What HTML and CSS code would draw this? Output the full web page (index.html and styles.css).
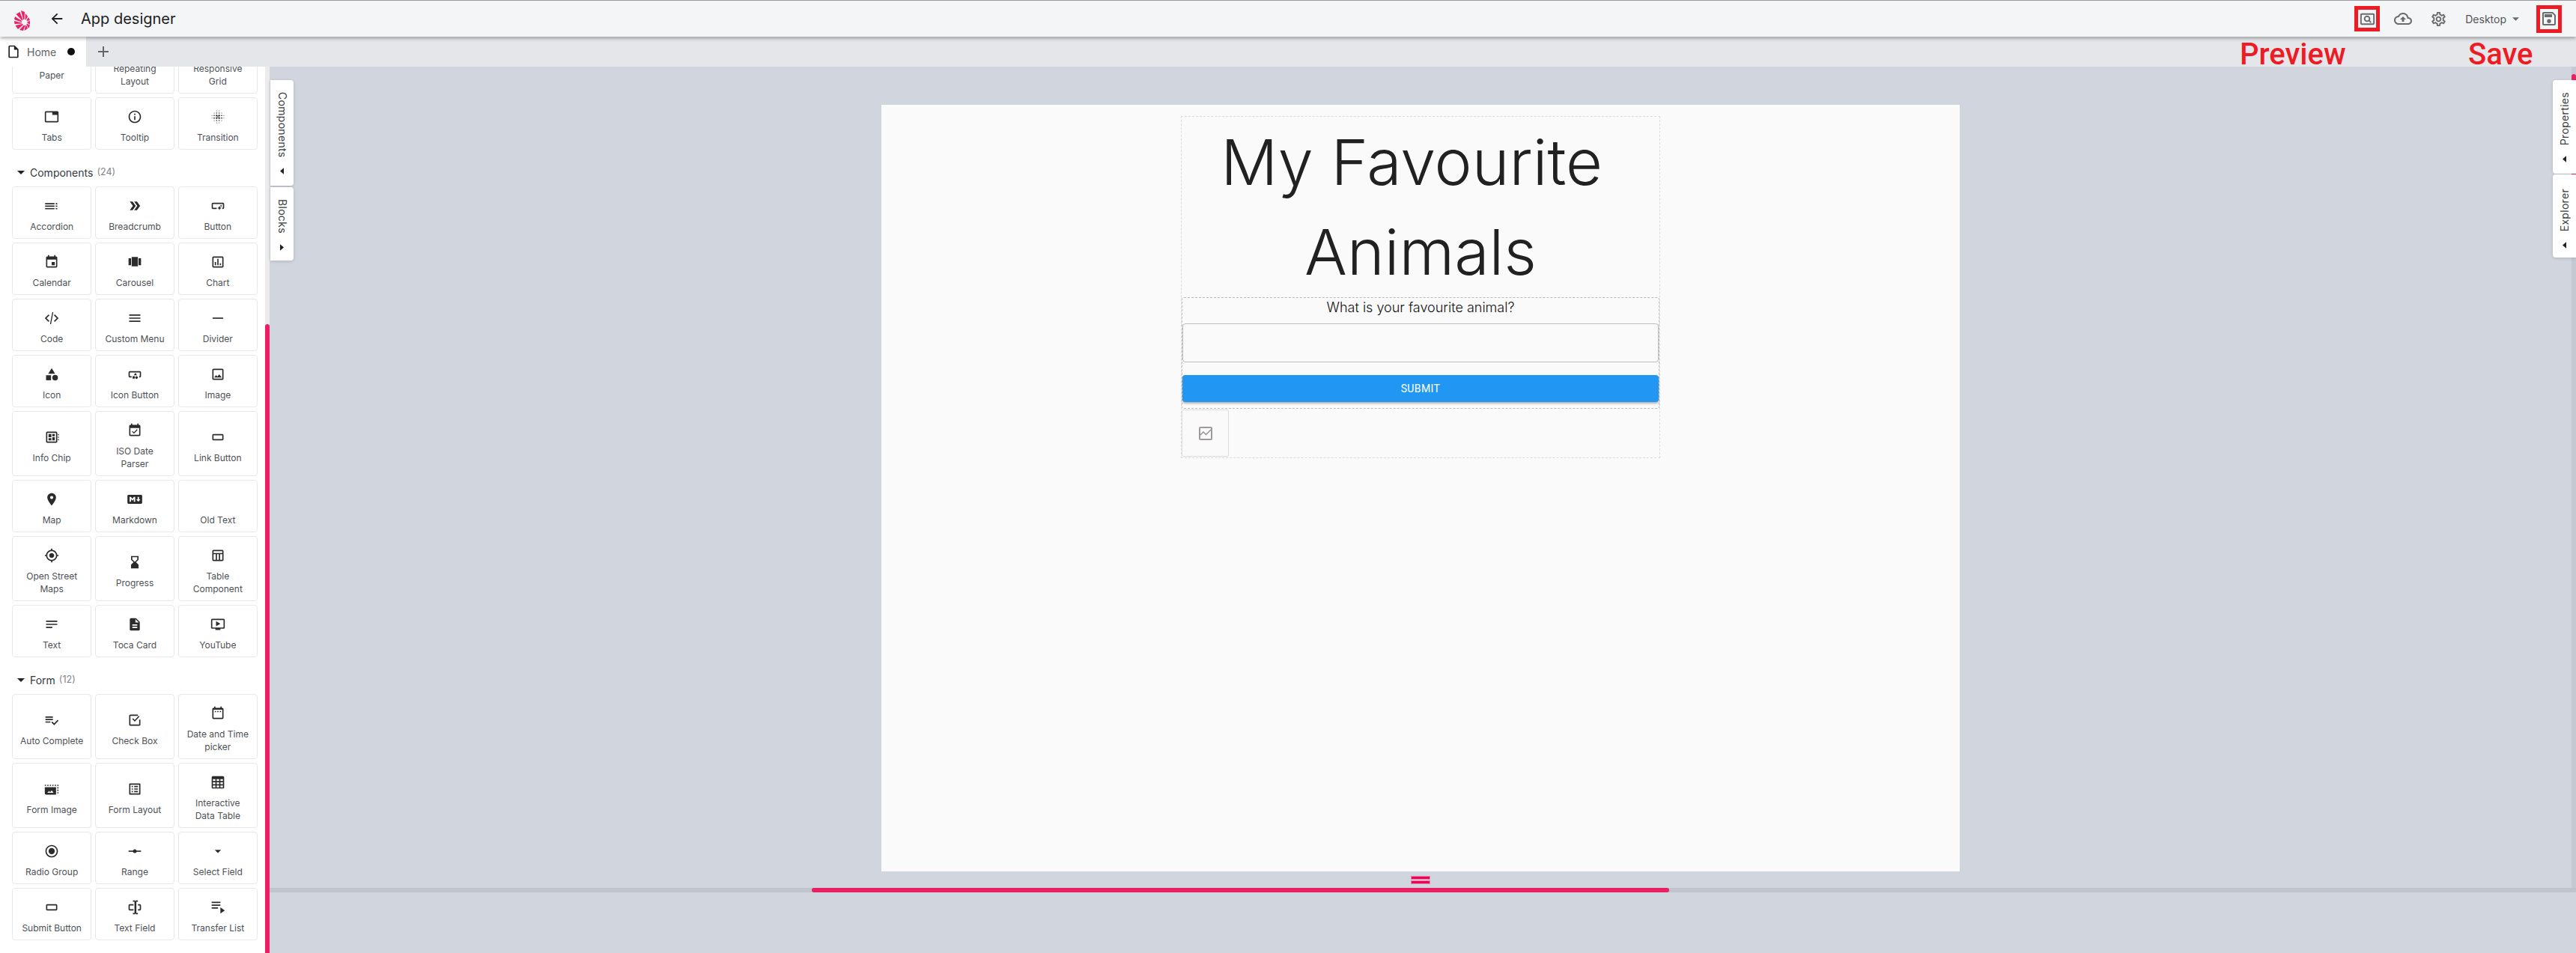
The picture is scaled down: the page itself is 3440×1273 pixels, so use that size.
FILE: index.html
```html
<!DOCTYPE html>
<html lang="en">
<head>
<meta charset="utf-8">
<title>App designer</title>
<link rel="stylesheet" href="styles.css">
</head>
<body>
<svg class="defs" width="0" height="0" aria-hidden="true">
<defs>
<symbol id="i-tabs" viewBox="0 0 24 24"><path d="M21 3H3c-1.1 0-2 .9-2 2v14c0 1.1.9 2 2 2h18c1.1 0 2-.9 2-2V5c0-1.1-.9-2-2-2zm0 16H3V5h10v4h8v10z"/></symbol>
<symbol id="i-info" viewBox="0 0 24 24"><path d="M11 7h2v2h-2zm0 4h2v6h-2zm1-9C6.48 2 2 6.48 2 12s4.48 10 10 10 10-4.48 10-10S17.52 2 12 2zm0 18c-4.41 0-8-3.59-8-8s3.59-8 8-8 8 3.59 8 8-3.59 8-8 8z"/></symbol>
<symbol id="i-blur" viewBox="0 0 24 24"><g><circle cx="10" cy="10" r="1.4"/><circle cx="14" cy="10" r="1.4"/><circle cx="10" cy="14" r="1.4"/><circle cx="14" cy="14" r="1.4"/><circle cx="12" cy="12" r="1"/><circle cx="6" cy="10" r="1"/><circle cx="6" cy="14" r="1"/><circle cx="18" cy="10" r="1"/><circle cx="18" cy="14" r="1"/><circle cx="10" cy="6" r="1"/><circle cx="14" cy="6" r="1"/><circle cx="10" cy="18" r="1"/><circle cx="14" cy="18" r="1"/><circle cx="6" cy="6" r=".7"/><circle cx="18" cy="6" r=".7"/><circle cx="6" cy="18" r=".7"/><circle cx="18" cy="18" r=".7"/><circle cx="2.5" cy="10" r=".6"/><circle cx="2.5" cy="14" r=".6"/><circle cx="21.5" cy="10" r=".6"/><circle cx="21.5" cy="14" r=".6"/><circle cx="10" cy="2.5" r=".6"/><circle cx="14" cy="2.5" r=".6"/><circle cx="10" cy="21.5" r=".6"/><circle cx="14" cy="21.5" r=".6"/></g></symbol>
<symbol id="i-accordion" viewBox="0 0 24 24"><path d="M1.500 7.500h15v2h-15zM1.500 11.500h15v2h-15zM1.500 15.500h15v2h-15zM18.500 7.500h2.500v2h-2.500zM18.500 11.500h2.500v2h-2.500zM18.500 15.500h2.500v2h-2.500z"/></symbol>
<symbol id="i-double" viewBox="0 0 24 24"><path d="M15.5 5H11l5 7-5 7h4.500l5-7zM8.500 5H4l5 7-5 7h4.500l5-7z"/></symbol>
<symbol id="i-smart" viewBox="0 0 24 24"><path d="M22 9v6c0 1.1-.9 2-2 2h-1v-2h1V9H4v6h6v2H4c-1.1 0-2-.9-2-2V9c0-1.1.9-2 2-2h16c1.1 0 2 .9 2 2zm-7.5 10l1.09-2.41L18 15.5l-2.41-1.09L14.5 12l-1.09 2.41L11 15.5l2.41 1.09L14.5 19zm2.5-5l.62-1.38L19 12l-1.38-.62L17 10l-.62 1.38L15 12l1.38.62L17 14z"/></symbol>
<symbol id="i-event" viewBox="0 0 24 24"><path d="M17 12h-5v5h5v-5zM16 1v2H8V1H6v2H5c-1.11 0-1.99.9-1.99 2L3 19c0 1.1.89 2 2 2h14c1.1 0 2-.9 2-2V5c0-1.1-.9-2-2-2h-1V1h-2zm3 18H5V8h14v11z"/></symbol>
<symbol id="i-carousel" viewBox="0 0 24 24"><path d="M7 19h10V4H7v15zm-5-2h4V6H2v11zM18 6v11h4V6h-4z"/></symbol>
<symbol id="i-chart" viewBox="0 0 24 24"><path d="M9 17H7v-5h2v5zm4 0h-2V7h2v10zm4 0h-2v-3h2v3zm2 2H5V5h14v14zm0-16H5c-1.1 0-2 .9-2 2v14c0 1.1.9 2 2 2h14c1.1 0 2-.9 2-2V5c0-1.1-.9-2-2-2z"/></symbol>
<symbol id="i-code" viewBox="0 0 24 24"><path d="M8.400 16.600L3.800 12l4.600-4.600L7 6l-6 6 6 6 1.400-1.400zm7.200 0l4.600-4.600-4.600-4.600L17 6l6 6-6 6-1.400-1.400zM13 2.500h1.600L11 21.500H9.400z"/></symbol>
<symbol id="i-menu" viewBox="0 0 24 24"><path d="M3 18h18v-2H3v2zm0-5h18v-2H3v2zm0-7v2h18V6H3z"/></symbol>
<symbol id="i-minus" viewBox="0 0 24 24"><path d="M3.500 11h17v2h-17z"/></symbol>
<symbol id="i-category" viewBox="0 0 24 24"><path d="M12 2l-5.500 9h11z"/><circle cx="17.500" cy="17.500" r="4.500"/><path d="M3 13.500h8v8H3z"/></symbol>
<symbol id="i-iconbtn" viewBox="0 0 24 24"><path d="M22 9v6c0 1.100-.9 2-2 2h-1v-2h1V9H4v6h3v2H4c-1.100 0-2-.9-2-2V9c0-1.100.9-2 2-2h16c1.100 0 2 .9 2 2zM13 9.500l-2.500 4h5zM17 17.200a2.200 2.200 0 1 1-4.400 0 2.200 2.200 0 0 1 4.400 0zM8.500 15h3.500v4H8.500z"/></symbol>
<symbol id="i-image" viewBox="0 0 24 24"><path d="M19 5v14H5V5h14m0-2H5c-1.100 0-2 .9-2 2v14c0 1.100.9 2 2 2h14c1.100 0 2-.9 2-2V5c0-1.100-.9-2-2-2zm-4.860 8.860l-3 3.870L9 13.140 6 17h12l-3.860-5.140z"/></symbol>
<symbol id="i-chip" viewBox="0 0 24 24"><path d="M19 3H5c-1.100 0-2 .9-2 2v14c0 1.100.9 2 2 2h14c1.100 0 2-.9 2-2V5c0-1.100-.9-2-2-2zm0 16H5V5h14v14zM7 7h4.500v5H7zM7 13.500h4.500V17H7zM13 7h4v3.500h-4zM13 12h4v5h-4zM22 7h1.500v2H22zM22 11h1.500v2H22zM22 15h1.500v2H22z"/></symbol>
<symbol id="i-eventok" viewBox="0 0 24 24"><path d="M16.530 11.060L15.470 10l-4.880 4.880-2.120-2.120-1.060 1.060L10.590 17l5.940-5.940zM19 3h-1V1h-2v2H8V1H6v2H5c-1.110 0-1.990.9-1.990 2L3 19c0 1.100.89 2 2 2h14c1.100 0 2-.9 2-2V5c0-1.100-.9-2-2-2zm0 16H5V8h14v11z"/></symbol>
<symbol id="i-rect" viewBox="0 0 24 24"><path d="M19 7H5c-1.100 0-2 .9-2 2v6c0 1.100.9 2 2 2h14c1.100 0 2-.9 2-2V9c0-1.100-.9-2-2-2zm0 8H5V9h14v6z"/></symbol>
<symbol id="i-pin" viewBox="0 0 24 24"><path d="M12 2C8.130 2 5 5.130 5 9c0 5.250 7 13 7 13s7-7.750 7-13c0-3.870-3.130-7-7-7zm0 9.500c-1.380 0-2.500-1.120-2.500-2.500s1.120-2.500 2.500-2.500 2.500 1.120 2.500 2.500-1.120 2.500-2.500 2.500z"/></symbol>
<symbol id="i-md" viewBox="0 0 24 24"><path d="M20.560 18H3.440C2.650 18 2 17.370 2 16.590V7.410C2 6.630 2.650 6 3.440 6h17.120c.79 0 1.440.63 1.440 1.410v9.180c0 .78-.65 1.410-1.440 1.410M6.810 15.190v-3.660l1.920 2.350 1.920-2.350v3.660h1.930V8.810h-1.930l-1.920 2.350-1.920-2.350H4.890v6.380h1.920M19.690 12h-1.920V8.810h-1.920V12h-1.930l2.890 3.280L19.690 12z" transform="translate(12 12) scale(1.180) translate(-12 -12)"/></symbol>
<symbol id="i-gps" viewBox="0 0 24 24"><path d="M12 8c-2.210 0-4 1.790-4 4s1.790 4 4 4 4-1.790 4-4-1.790-4-4-4zm8.940 3c-.46-4.170-3.770-7.480-7.940-7.940V1h-2v2.060C6.830 3.520 3.520 6.830 3.060 11H1v2h2.060c.46 4.170 3.770 7.480 7.940 7.940V23h2v-2.060c4.170-.46 7.480-3.770 7.940-7.940H23v-2h-2.060zM12 19c-3.870 0-7-3.130-7-7s3.130-7 7-7 7 3.130 7 7-3.130 7-7 7z"/></symbol>
<symbol id="i-hourglass" viewBox="0 0 24 24"><path d="M18 22l-.01-6L14 12l3.990-4.010L18 2H6v6l4 4-4 3.990V22h12zM8 7.500V4h8v3.500l-4 4-4-4z"/></symbol>
<symbol id="i-table" viewBox="0 0 24 24"><path d="M19 3H5c-1.100 0-2 .9-2 2v14c0 1.100.9 2 2 2h14c1.100 0 2-.9 2-2V5c0-1.100-.9-2-2-2zm0 2v3H5V5h14zM5 19v-9h3.500v9H5zm5.500 0v-9h3v9h-3zm5 0v-9H19v9h-3.500z"/></symbol>
<symbol id="i-notes" viewBox="0 0 24 24"><path d="M3 18h10v-2H3v2zM3 6v2h18V6H3zm0 7h18v-2H3v2z"/></symbol>
<symbol id="i-doc" viewBox="0 0 24 24"><path d="M14 2H6c-1.100 0-1.990.9-1.990 2L4 20c0 1.100.89 2 1.990 2H18c1.100 0 2-.9 2-2V8l-6-6zm2 16H8v-2h8v2zm0-4H8v-2h8v2zm-3-5V3.500L18.500 9H13z"/></symbol>
<symbol id="i-video" viewBox="0 0 24 24"><path d="M21 3H3c-1.110 0-2 .89-2 2v12c0 1.100.89 2 2 2h5v2h8v-2h5c1.100 0 1.990-.9 1.990-2L23 5c0-1.110-.9-2-2-2zm0 14H3V5h18v12zm-5-6l-7 4V7z"/></symbol>
<symbol id="i-listcheck" viewBox="0 0 24 24"><path d="M14 10H2v2h12v-2zm0-4H2v2h12V6zM2 16h8v-2H2v2zm19.500-4.500L23 13l-6.990 7-4.510-4.500L13 14l3.010 3 5.490-5.500z"/></symbol>
<symbol id="i-check" viewBox="0 0 24 24"><path d="M19 19H5V5h12V3H5c-1.110 0-2 .9-2 2v14c0 1.100.89 2 2 2h14c1.110 0 2-.9 2-2v-8h-2v8zM19.500 6.400l-1.400-1.400-6.100 6.600-2.700-2.700-1.400 1.400 4.100 4.100z"/></symbol>
<symbol id="i-datetime" viewBox="0 0 24 24"><path d="M19 3h-1V1h-2v2H8V1H6v2H5c-1.110 0-1.990.9-1.990 2L3 19c0 1.100.89 2 2 2h14c1.100 0 2-.9 2-2V5c0-1.100-.9-2-2-2zm0 16H5V6h14v13zM7 8h2v2H7zM11 8h2v2h-2zM15 8h2v2h-2z"/></symbol>
<symbol id="i-formimg" viewBox="0 0 24 24"><path d="M1 5h2v2H1zM5 5h2v2H5zM9 5h2v2H9zM13 5h2v2h-2zM17 5h2v2h-2zM21 5h2v2h-2zM21 9h2v2h-2zM21 13h2v2h-2zM21 17h2v2h-2zM1 9h18v12H3c-1.100 0-2-.9-2-2zM5 18h10l-3-4-2.500 3-1.500-2z" fill-rule="evenodd"/></symbol>
<symbol id="i-listalt" viewBox="0 0 24 24"><path d="M19 5v14H5V5h14m1.100-2H3.900c-.5 0-.9.4-.9.9v16.200c0 .4.4.9.9.9h16.200c.4 0 .9-.5.9-.9V3.900c0-.5-.5-.9-.9-.9zM11 7h6v2h-6V7zm0 4h6v2h-6v-2zm0 4h6v2h-6zM7 7h2v2H7zm0 4h2v2H7zm0 4h2v2H7z"/></symbol>
<symbol id="i-grid" viewBox="0 0 24 24"><path d="M20 2H4c-1.100 0-2 .9-2 2v16c0 1.100.9 2 2 2h16c1.100 0 2-.9 2-2V4c0-1.100-.9-2-2-2zM8 20H4v-3h4zm0-5H4v-3h4zm0-5H4V7h4zm6 10h-4v-3h4zm0-5h-4v-3h4zm0-5h-4V7h4zm6 10h-4v-3h4zm0-5h-4v-3h4zm0-5h-4V7h4z"/></symbol>
<symbol id="i-radio" viewBox="0 0 24 24"><path d="M12 7c-2.760 0-5 2.240-5 5s2.240 5 5 5 5-2.240 5-5-2.240-5-5-5zm0-5C6.480 2 2 6.480 2 12s4.480 10 10 10 10-4.480 10-10S17.520 2 12 2zm0 18c-4.420 0-8-3.580-8-8s3.580-8 8-8 8 3.580 8 8-3.580 8-8 8z"/></symbol>
<symbol id="i-range" viewBox="0 0 24 24"><path d="M2 11h20v2H2z"/><circle cx="12" cy="12" r="3"/></symbol>
<symbol id="i-drop" viewBox="0 0 24 24"><path d="M7 10l5 5 5-5z"/></symbol>
<symbol id="i-field" viewBox="0 0 24 24"><path d="M2 7h8v2H4v6h6v2H4c-1.100 0-2-.9-2-2V9c0-1.100.9-2 2-2zM17 7h3c1.100 0 2 .9 2 2v6c0 1.100-.9 2-2 2h-3v-2h3V9h-3zM9 1h3l1 1 1-1h3v2h-2.500v18H17v2h-3l-1-1-1 1H9v-2h2.500V3H9z"/></symbol>
<symbol id="i-transfer" viewBox="0 0 24 24"><path d="M2 3h14v2H2zM2 7.500h14v2H2zM2 12h10v2H2zM16 12l7 5-7 5z"/></symbol>
<symbol id="i-caret" viewBox="0 0 10 5"><path d="M0 0h10L5 5z"/></symbol>
</defs>
</svg>

<header class="topbar">
  <svg class="logo" viewBox="0 0 21 27">
    <g fill="#ec1f65">
      <path d="M9 0l5 2-.5 10H12z"/>
      <path d="M2.500 5l5-3 4 10.500-1 1z"/>
      <path d="M0 12l1-4 9 6v1.500z"/>
      <path d="M.5 18L0 14l10 2.500.5 1z"/>
      <path d="M5 25l-3.500-5 9.500-2 1 1z"/>
      <path d="M12 27l-5-1 6-6.500 1.500.5z"/>
      <path d="M18 24l-4.500 3 1.500-7 1-.5z"/>
      <path d="M21 20l-2 4-2.500-5.500.5-1z"/>
      <path d="M21 14v5l-3.500-2.500V15z"/>
      <path d="M19 9l2 4-4 1-.5-1z"/>
      <path d="M15 4l3 4-2.500 4.500-1-.5z"/>
    </g>
  </svg>
  <svg class="back" viewBox="0 0 24 24"><path d="M20 11H7.830l5.590-5.590L12 4l-8 8 8 8 1.410-1.410L7.830 13H20v-2z"/></svg>
  <h1 class="apptitle">App designer</h1>
  <div class="actions">
    <span class="framed framed-preview">
      <svg class="tool tool-preview" viewBox="0 0 24 24"><path d="M20 4H4c-1.100 0-2 .9-2 2v12c0 1.100.9 2 2 2h16c1.100 0 2-.9 2-2V6c0-1.100-.9-2-2-2zm0 14H4V6h16v12z"/><path d="M11.500 7a4.500 4.500 0 1 0 2.500 8.240l2.300 2.300 1.400-1.400-2.300-2.300A4.500 4.500 0 0 0 11.500 7zm0 2a2.500 2.500 0 1 1 0 5 2.500 2.500 0 0 1 0-5z"/></svg>
    </span>
    <svg class="tool tool-cloud" viewBox="0 0 24 24"><path d="M19.350 10.040C18.670 6.590 15.640 4 12 4 9.110 4 6.600 5.640 5.350 8.040 2.340 8.360 0 10.910 0 14c0 3.310 2.690 6 6 6h13c2.760 0 5-2.240 5-5 0-2.640-2.050-4.780-4.650-4.960zM19 18H6c-2.210 0-4-1.790-4-4 0-2.050 1.530-3.760 3.560-3.970l1.070-.11.500-.95C8.080 7.140 9.940 6 12 6c2.620 0 4.880 1.860 5.390 4.430l.3 1.500 1.530.11c1.560.1 2.780 1.410 2.780 2.960 0 1.650-1.350 3-3 3zM8 13h2.550v3h2.900v-3H16l-4-4z"/></svg>
    <svg class="tool tool-gear" viewBox="0 0 24 24"><path d="M19.430 12.980c.04-.32.07-.64.07-.98 0-.34-.03-.66-.07-.98l2.110-1.650c.19-.15.24-.42.12-.64l-2-3.460c-.09-.16-.26-.25-.44-.25-.06 0-.12.01-.17.03l-2.490 1c-.52-.4-1.080-.73-1.690-.98l-.38-2.650C14.460 2.180 14.250 2 14 2h-4c-.25 0-.46.18-.49.42l-.38 2.650c-.61.25-1.170.59-1.690.98l-2.490-1c-.06-.02-.12-.03-.18-.03-.17 0-.34.09-.43.25l-2 3.460c-.13.22-.07.49.12.64l2.110 1.650c-.04.32-.07.65-.07.98 0 .33.03.66.07.98l-2.110 1.650c-.19.15-.24.42-.12.64l2 3.460c.09.16.26.25.44.25.06 0 .12-.01.17-.03l2.490-1c.52.4 1.080.73 1.690.98l.38 2.650c.03.24.24.42.49.42h4c.25 0 .46-.18.49-.42l.38-2.650c.61-.25 1.170-.59 1.690-.98l2.490 1c.06.02.12.03.18.03.17 0 .34-.09.43-.25l2-3.460c.12-.22.07-.49-.12-.64l-2.110-1.650zm-1.980-1.710c.04.31.05.52.05.73 0 .21-.02.43-.05.73l-.14 1.130.89.7 1.080.84-.7 1.210-1.270-.51-1.040-.42-.9.68c-.43.32-.84.56-1.250.73l-1.060.43-.16 1.130-.2 1.350h-1.400l-.19-1.350-.16-1.130-1.060-.43c-.43-.18-.83-.41-1.230-.71l-.91-.7-1.060.43-1.270.51-.7-1.210 1.080-.84.89-.7-.14-1.130c-.03-.31-.05-.54-.05-.74s.02-.43.05-.73l.14-1.130-.89-.7-1.080-.84.7-1.210 1.270.51 1.040.42.9-.68c.43-.32.84-.56 1.250-.73l1.060-.43.16-1.130.2-1.350h1.390l.19 1.350.16 1.130 1.060.43c.43.18.83.41 1.230.71l.91.7 1.060-.43 1.270-.51.7 1.210-1.070.85-.89.7.14 1.130zM12 8c-2.210 0-4 1.790-4 4s1.790 4 4 4 4-1.790 4-4-1.790-4-4-4zm0 6c-1.100 0-2-.9-2-2s.9-2 2-2 2 .9 2 2-.9 2-2 2z"/></svg>
    <span class="device">Desktop</span>
    <svg class="device-caret" viewBox="0 0 10 5"><path d="M0 0h10L5 5z"/></svg>
    <span class="framed framed-save">
      <svg class="tool tool-save" viewBox="0 0 24 24"><path d="M17 3H5c-1.110 0-2 .9-2 2v14c0 1.100.89 2 2 2h14c1.100 0 2-.9 2-2V7l-4-4zm2 16H5V5h11.170L19 7.830V19zM12 12.500a2.700 2.700 0 1 0 0 5.400 2.700 2.700 0 0 0 0-5.400zM6 6h10v4H6z"/></svg>
    </span>
  </div>
  <span class="note note-preview">Preview</span>
  <span class="note note-save">Save</span>
</header>

<nav class="tabbar">
  <div class="tab">
    <svg class="tabfile" viewBox="0 0 24 24"><path d="M14 2H6c-1.100 0-1.990.9-1.990 2L4 20c0 1.100.89 2 1.990 2H18c1.100 0 2-.9 2-2V8l-6-6zM6 20V4h7v5h5v11H6z"/></svg>
    <span class="tabname">Home</span>
    <span class="tabdot"></span>
  </div>
  <svg class="tabplus" viewBox="0 0 24 24"><path d="M19 13h-6v6h-2v-6H5v-2h6V5h2v6h6v2z"/></svg>
</nav>

<main class="workspace">
  <aside class="sidebar">
    <div class="palette">
      <div class="cards">
        <div class="card"><span class="card-icon"></span><span class="card-label">Paper</span></div>
        <div class="card"><span class="card-icon"></span><span class="card-label">Repeating Layout</span></div>
        <div class="card"><span class="card-icon"></span><span class="card-label">Responsive Grid</span></div>
        <div class="card"><svg class="card-icon"><use href="#i-tabs"/></svg><span class="card-label">Tabs</span></div>
        <div class="card"><svg class="card-icon"><use href="#i-info"/></svg><span class="card-label">Tooltip</span></div>
        <div class="card"><svg class="card-icon"><use href="#i-blur"/></svg><span class="card-label">Transition</span></div>
      </div>
      <div class="section"><svg class="section-caret"><use href="#i-caret"/></svg><span class="section-name">Components</span><span class="section-count">(24)</span></div>
      <div class="cards">
        <div class="card"><svg class="card-icon"><use href="#i-accordion"/></svg><span class="card-label">Accordion</span></div>
        <div class="card"><svg class="card-icon"><use href="#i-double"/></svg><span class="card-label">Breadcrumb</span></div>
        <div class="card"><svg class="card-icon"><use href="#i-smart"/></svg><span class="card-label">Button</span></div>
        <div class="card"><svg class="card-icon"><use href="#i-event"/></svg><span class="card-label">Calendar</span></div>
        <div class="card"><svg class="card-icon"><use href="#i-carousel"/></svg><span class="card-label">Carousel</span></div>
        <div class="card"><svg class="card-icon"><use href="#i-chart"/></svg><span class="card-label">Chart</span></div>
        <div class="card"><svg class="card-icon"><use href="#i-code"/></svg><span class="card-label">Code</span></div>
        <div class="card"><svg class="card-icon"><use href="#i-menu"/></svg><span class="card-label">Custom Menu</span></div>
        <div class="card"><svg class="card-icon"><use href="#i-minus"/></svg><span class="card-label">Divider</span></div>
        <div class="card"><svg class="card-icon"><use href="#i-category"/></svg><span class="card-label">Icon</span></div>
        <div class="card"><svg class="card-icon"><use href="#i-iconbtn"/></svg><span class="card-label">Icon Button</span></div>
        <div class="card"><svg class="card-icon"><use href="#i-image"/></svg><span class="card-label">Image</span></div>
        <div class="card"><svg class="card-icon"><use href="#i-chip"/></svg><span class="card-label">Info Chip</span></div>
        <div class="card"><svg class="card-icon"><use href="#i-eventok"/></svg><span class="card-label">ISO Date Parser</span></div>
        <div class="card"><svg class="card-icon"><use href="#i-rect"/></svg><span class="card-label">Link Button</span></div>
        <div class="card"><svg class="card-icon"><use href="#i-pin"/></svg><span class="card-label">Map</span></div>
        <div class="card"><svg class="card-icon"><use href="#i-md"/></svg><span class="card-label">Markdown</span></div>
        <div class="card"><span class="card-icon"></span><span class="card-label">Old Text</span></div>
        <div class="card"><svg class="card-icon"><use href="#i-gps"/></svg><span class="card-label">Open Street Maps</span></div>
        <div class="card"><svg class="card-icon"><use href="#i-hourglass"/></svg><span class="card-label">Progress</span></div>
        <div class="card"><svg class="card-icon"><use href="#i-table"/></svg><span class="card-label">Table Component</span></div>
        <div class="card"><svg class="card-icon"><use href="#i-notes"/></svg><span class="card-label">Text</span></div>
        <div class="card"><svg class="card-icon"><use href="#i-doc"/></svg><span class="card-label">Toca Card</span></div>
        <div class="card"><svg class="card-icon"><use href="#i-video"/></svg><span class="card-label">YouTube</span></div>
      </div>
      <div class="section"><svg class="section-caret"><use href="#i-caret"/></svg><span class="section-name">Form</span><span class="section-count">(12)</span></div>
      <div class="cards">
        <div class="card"><svg class="card-icon"><use href="#i-listcheck"/></svg><span class="card-label">Auto Complete</span></div>
        <div class="card"><svg class="card-icon"><use href="#i-check"/></svg><span class="card-label">Check Box</span></div>
        <div class="card"><svg class="card-icon"><use href="#i-datetime"/></svg><span class="card-label">Date and Time picker</span></div>
        <div class="card"><svg class="card-icon"><use href="#i-formimg"/></svg><span class="card-label">Form Image</span></div>
        <div class="card"><svg class="card-icon"><use href="#i-listalt"/></svg><span class="card-label">Form Layout</span></div>
        <div class="card"><svg class="card-icon"><use href="#i-grid"/></svg><span class="card-label">Interactive Data Table</span></div>
        <div class="card"><svg class="card-icon"><use href="#i-radio"/></svg><span class="card-label">Radio Group</span></div>
        <div class="card"><svg class="card-icon"><use href="#i-range"/></svg><span class="card-label">Range</span></div>
        <div class="card"><svg class="card-icon"><use href="#i-drop"/></svg><span class="card-label">Select Field</span></div>
        <div class="card"><svg class="card-icon"><use href="#i-rect"/></svg><span class="card-label">Submit Button</span></div>
        <div class="card"><svg class="card-icon"><use href="#i-field"/></svg><span class="card-label">Text Field</span></div>
        <div class="card"><svg class="card-icon"><use href="#i-transfer"/></svg><span class="card-label">Transfer List</span></div>
      </div>
    </div>
    <div class="vscroll"><div class="vthumb"></div></div>
  </aside>

  <section class="canvas">
    <div class="stage">
      <div class="page">
        <div class="root-box">
          <div class="heading">My Favourite&nbsp; Animals</div>
          <form class="form-box">
            <div class="question">What is your favourite animal?</div>
            <div class="answer"></div>
            <div class="submit">SUBMIT</div>
          </form>
          <div class="placeholder">
            <svg class="placeholder-icon" viewBox="0 0 18 18"><rect x="1" y="1" width="16" height="16" rx="1" fill="none" stroke="#a09a9a" stroke-width="2"/><path d="M2 11l4-4 3.500 3.500L16 4" fill="none" stroke="#8f8f8f" stroke-width="1.300"/></svg>
          </div>
        </div>
      </div>
      <div class="grip"><span></span><span></span></div>
    </div>
    <div class="hscroll"><div class="hthumb"></div></div>

    <div class="side-tabs side-tabs-left">
      <div class="side-tab tab-components"><span class="side-label">Components</span><svg class="arrow" viewBox="0 0 6 10"><path d="M6 0v10L0 5z"/></svg></div>
      <div class="side-tab tab-blocks"><span class="side-label">Blocks</span><svg class="arrow" viewBox="0 0 6 10"><path d="M0 0v10l6-5z"/></svg></div>
    </div>
    <div class="rscroll"><div class="rthumb"></div></div>
    <div class="side-tabs side-tabs-right">
      <div class="side-tab tab-properties"><span class="side-label side-label-up">Properties</span><svg class="arrow" viewBox="0 0 6 10"><path d="M6 0v10L0 5z"/></svg></div>
      <div class="side-tab tab-explorer"><span class="side-label side-label-up">Explorer</span><svg class="arrow" viewBox="0 0 6 10"><path d="M6 0v10L0 5z"/></svg></div>
    </div>
  </section>
</main>
</body>
</html>
```
FILE: styles.css
```css
* { box-sizing: border-box; }
html, body { margin: 0; height: 100%; }
body {
  width: 3440px;
  height: 1273px;
  overflow: hidden;
  display: flex;
  flex-direction: column;
  font-family: Inter, "Liberation Sans", sans-serif;
  color: #212121;
  background: #d1d5dd;
}
.defs { position: absolute; }

/* top bar */
.topbar {
  position: relative;
  z-index: 3;
  flex: 0 0 49px;
  display: flex;
  align-items: center;
  background: #f4f5f7;
  border-top: 1px solid #9a9a9a;
  box-shadow: 0 2px 5px rgba(0, 0, 0, .35);
}
.logo { width: 21px; height: 27px; margin: 5px 0 0 19px; }
.back { width: 22px; height: 22px; margin-left: 25px; fill: #212121; }
.apptitle { margin: 0 0 0 21px; font-size: 20px; font-weight: 400; letter-spacing: 0; }
.actions { margin-left: auto; display: flex; align-items: center; padding-right: 19px; }
.tool { width: 22px; height: 22px; fill: #6b6b6b; display: block; }
.framed { display: flex; align-items: center; justify-content: center; border: 5px solid #ed1c24; }
.framed-preview { width: 34px; height: 34px; }
.framed-save { width: 34px; height: 37px; margin-left: 23px; }
.tool-preview { width: 23px; height: 23px; flex: none; }
.tool-save { width: 24px; height: 24px; flex: none; }
.tool-cloud { width: 24px; height: 24px; margin-left: 19px; }
.tool-gear { width: 23px; height: 23px; margin-left: 24px; }
.device { margin-left: 24px; font-size: 14px; color: #555; }
.device-caret { width: 9px; height: 5px; margin-left: 8px; fill: #6b6b6b; }
.note { position: absolute; color: #ed1c24; font-family: Roboto, sans-serif; font-weight: 500; font-size: 40px; line-height: 46px; }
.note-preview { top: 49px; left: 2991px; }
.note-save { top: 49px; left: 3296px; }

/* tabs */
.tabbar {
  position: relative;
  z-index: 2;
  flex: 0 0 40px;
  display: flex;
  align-items: center;
  background: #e4e6ea;
}
.tab { width: 115px; height: 40px; background: #fff; display: flex; align-items: center; padding-left: 8px; }
.tabfile { width: 20px; height: 20px; fill: #212121; }
.tabname { margin-left: 8px; font-size: 14px; color: #5f6368; }
.tabdot { width: 10px; height: 10px; margin-left: 15px; border-radius: 50%; background: #111; }
.tabplus { width: 24px; height: 24px; margin-left: 11px; fill: #666; }

/* main */
.workspace { flex: 1; min-height: 0; display: flex; }
.sidebar { flex: 0 0 360px; display: flex; background: #fff; overflow: hidden; }
.palette { flex: 0 0 354px; padding: 0 10px 0 16px; margin-top: -51px; }
.cards { display: grid; grid-template-columns: repeat(3, 1fr); column-gap: 4.500px; row-gap: 5px; }
.card {
  min-height: 70px;
  padding: 13px 8px 7px;
  display: flex;
  flex-direction: column;
  align-items: center;
  justify-content: center;
  border: 1px solid #e6e8ec;
  border-radius: 4px;
  background: #fff;
  text-align: center;
}
.card-icon { flex: none; display: block; width: 20px; height: 20px; margin: 2px 0 9px; fill: #2b2b2b; }
.card-label { font-size: 12px; line-height: 17px; color: #4d5156; }
.section { height: 49px; padding: 21px 0 10px 7px; display: flex; align-items: center; }
.section-caret { width: 10px; height: 5px; fill: #222; }
.section-name { margin-left: 7px; font-size: 14px; color: #33383d; }
.section-count { margin-left: 5px; font-size: 12.500px; color: #808488; position: relative; top: -1px; }
.vscroll { flex: 0 0 6px; display: flex; flex-direction: column; padding-top: 344px; background: #ececee; }
.vthumb { flex: 1; background: #ec1f65; border-radius: 3px 3px 0 0; }

.canvas { flex: 1; position: relative; display: flex; flex-direction: column; min-width: 0; }
.stage { position: relative; flex: 0 0 1097px; padding: 51px 0 0 817px; }
.page { width: 1440px; height: 1024px; padding: 15px 0 0 400px; background: #fafafa; }
.root-box { width: 640px; height: 457px; border: 1px dashed #dcdcdc; }
.heading { font-size: 84.500px; font-weight: 340; line-height: 120px; text-align: center; color: #212121; height: 241px; }
.form-box { display: block; margin: 0; height: 149px; border: 1px dashed #bcbcbc; border-radius: 3px; }
.question { height: 34px; font-size: 18px; font-weight: 300; line-height: 26px; text-align: center; color: #111; }
.answer { height: 52px; border: 1px solid #bdbdbd; border-radius: 4px; background: #fafafa; }
.submit {
  height: 36px;
  margin-top: 17px;
  border-radius: 4px;
  background: #2196f3;
  color: #fff;
  font: 400 14px/36px Roboto, sans-serif;
  letter-spacing: .4px;
  text-align: center;
  box-shadow: 0 2px 3px rgba(0, 0, 0, .3);
}
.placeholder { width: 63px; height: 63px; margin-top: 1px; display: flex; align-items: center; justify-content: center; border: 1px solid #ddd; border-radius: 2px; }
.placeholder-icon { width: 18px; height: 18px; }
.grip { position: absolute; left: 1525px; top: 1082px; width: 24px; display: flex; flex-direction: column; gap: 3px; }
.grip span { height: 3px; background: #f50057; box-shadow: 0 0 0 1px rgba(245, 0, 87, .35); }
.hscroll { flex: 0 0 6px; background: #c0c4cc; padding-left: 724px; }
.hthumb { width: 1145px; height: 6px; background: #ec1f65; border-radius: 3px; }

.side-tabs { position: absolute; top: 18px; display: flex; flex-direction: column; z-index: 1; }
.side-tabs-left { left: 1px; gap: 2px; }
.side-tabs-right { right: 0; gap: 1px; }
.side-tab { display: flex; flex-direction: column; align-items: center; width: 31px; background: #fff; box-shadow: 0 1px 4px rgba(0, 0, 0, .16); padding-top: 16px; }
.side-tabs-left .side-tab { border-radius: 0 4px 4px 0; }
.side-tabs-right .side-tab { border-radius: 4px 0 0 4px; }
.tab-components { height: 141px; }
.tab-blocks { height: 98px; }
.tab-properties { height: 125px; }
.tab-explorer { height: 111px; padding-top: 19px; }
.side-label { writing-mode: vertical-rl; font-size: 14px; letter-spacing: .3px; line-height: 18px; color: #3c3f43; }
.side-label-up { transform: rotate(180deg); }
.arrow { width: 5px; height: 9px; fill: #222; margin-top: 14px; }
.rscroll { position: absolute; right: 0; top: 0; width: 6px; height: 1097px; background: #c6cad2; padding-top: 10px; }
.rthumb { height: 220px; background: #ec1f65; border-radius: 3px 3px 0 0; }
```
